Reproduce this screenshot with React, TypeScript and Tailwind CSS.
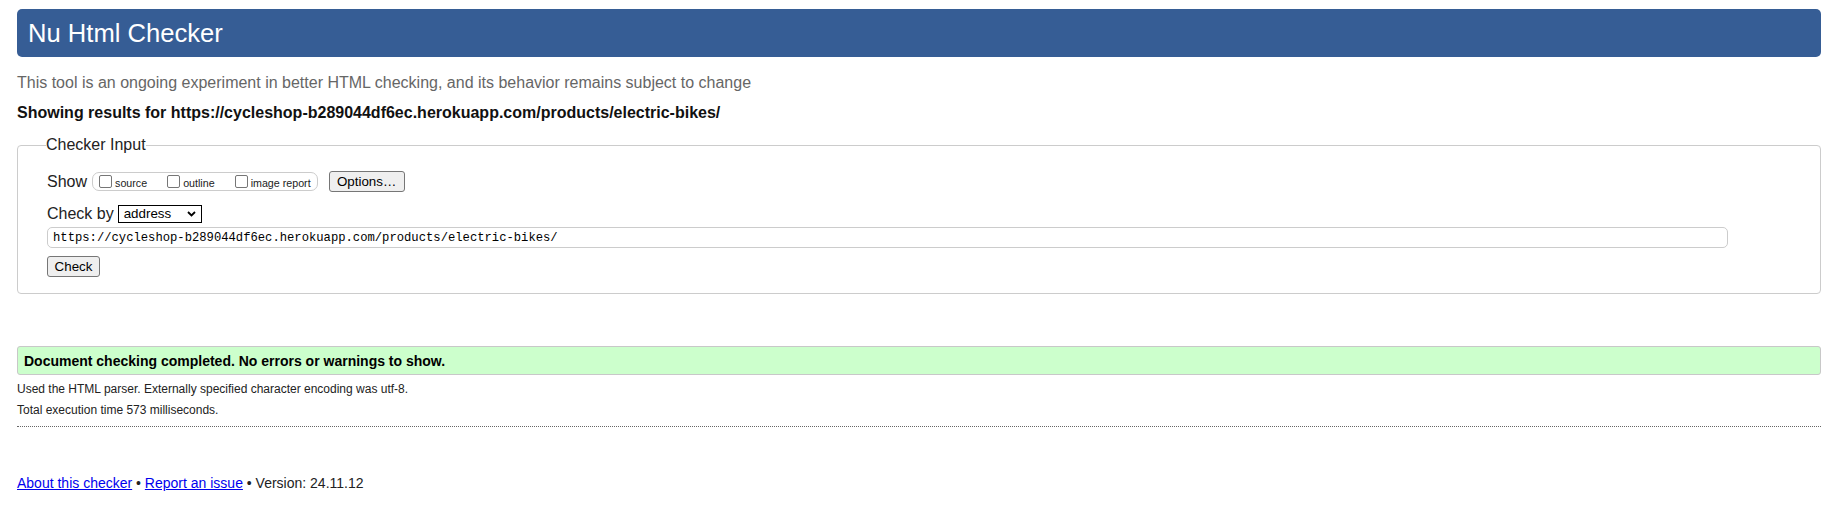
import React from 'react';

const checkUrl = 'https://cycleshop-b289044df6ec.herokuapp.com/products/electric-bikes/';

function ShowOption({ label, last }: { label: string; last?: boolean }) {
  return (
    <label className={`flex items-center ${last ? 'mr-[6px]' : 'mr-[20px]'}`}>
      <input
        type="checkbox"
        className="appearance-none w-[13px] h-[13px] m-0 border border-[#767676] rounded-[2px] bg-white"
      />
      <span className="ml-[3px] text-[10.7px] leading-[13px] mt-[3px]">{label}</span>
    </label>
  );
}

function NativeButton({ children, className = '' }: { children: React.ReactNode; className?: string }) {
  return (
    <button
      type="button"
      className={`h-[21px] border border-[#767676] rounded-[3px] bg-[#efefef] text-[13.33px] leading-[15px] text-black ${className}`}
    >
      {children}
    </button>
  );
}

export default function App() {
  return (
    <div className="min-h-screen bg-white pl-[17px] pr-[14px] pt-[9px] font-['Liberation_Sans',Arial,sans-serif] text-[16px] text-[#222]">
      {/* title bar */}
      <h1 className="h-[48px] flex items-center pl-[11px] rounded-[5px] bg-[#365d95] text-white text-[25.6px] font-normal">
        Nu Html Checker
      </h1>

      <p className="mt-[17px] leading-[18px] text-[#666]">
        This tool is an ongoing experiment in better HTML checking, and its behavior remains subject to change
      </p>
      <p className="mt-[12px] leading-[18px] font-bold text-[#111]">Showing results for {checkUrl}</p>

      {/* checker input */}
      <fieldset className="mt-[14px] border border-[#ccc] rounded-[4px] pl-[29px] pt-[17px] pb-[16px]">
        <legend className="leading-[18px] px-0 -ml-[1px]">Checker Input</legend>

        <div className="flex items-center h-[21px]">
          <span className="leading-[18px]">Show</span>
          <div className="ml-[5px] h-[19px] flex items-center pl-[6px] border border-[#ccc] rounded-[7px]">
            <ShowOption label="source" />
            <ShowOption label="outline" />
            <ShowOption label="image report" last />
          </div>
          <NativeButton className="ml-[11px] w-[76px]">Options…</NativeButton>
        </div>

        <div className="flex items-center h-[18px] mt-[13px]">
          <span className="leading-[18px]">Check by</span>
          <div className="ml-[4px] w-[84px] h-[18px] flex items-center justify-between pl-[5px] pr-[5px] border border-black bg-white">
            <span className="text-[13.33px] leading-[16px] text-black">address</span>
            <svg width="9" height="6" viewBox="0 0 9 6" fill="none">
              <path d="M1 1l3.5 3.5L8 1" stroke="#000" strokeWidth="1.8" />
            </svg>
          </div>
        </div>

        <input
          type="text"
          readOnly
          value={checkUrl}
          className="block mt-[4px] w-[1681px] h-[21px] pl-[5px] border border-[#ccc] rounded-[5px] font-['Liberation_Mono',monospace] text-[12.2px] text-black"
        />

        <NativeButton className="block mt-[8px] w-[53px]">Check</NativeButton>
      </fieldset>

      {/* result */}
      <div className="mt-[52px] h-[29px] flex items-center pl-[6px] border border-[#c8c8c8] rounded-[3px] bg-[#ccffcc]">
        <p className="text-[14px] leading-[16px] font-bold text-black">
          Document checking completed. No errors or warnings to show.
        </p>
      </div>

      <div className="pb-[8px] border-b border-dotted border-[#666] text-[12px] leading-[15px] text-[#222]">
        <p className="mt-[7px]">Used the HTML parser. Externally specified character encoding was utf-8.</p>
        <p className="mt-[6px]">Total execution time 573 milliseconds.</p>
      </div>

      <p className="mt-[48px] text-[14px] leading-[16px] text-[#222]">
        <a href="#" className="text-[#00e] underline">About this checker</a>
        {' • '}
        <a href="#" className="text-[#00e] underline">Report an issue</a>
        {' • Version: 24.11.12'}
      </p>
    </div>
  );
}
